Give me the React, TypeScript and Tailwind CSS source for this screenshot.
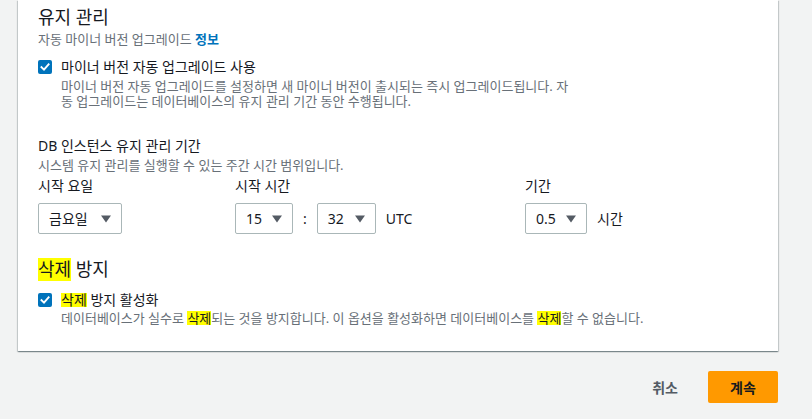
export default function App() {
  return (
    <div className="bg-[#f2f3f3] w-[812px] h-[419px] overflow-hidden font-['Noto_Sans','Noto_Sans_CJK_KR',sans-serif] text-[#16191f]">
      {/* 카드 */}
      <div className="bg-white ml-[18px] w-[760px] px-5 pt-[5px] pb-[25px] shadow-[0_1px_1px_0_rgba(0,28,36,0.3),1px_1px_1px_0_rgba(0,28,36,0.15),-1px_1px_1px_0_rgba(0,28,36,0.15)]">
        <h2 className="text-[18px] leading-6">유지 관리</h2>
        <div className="mt-[1px] text-[13px] text-[#687078] leading-[18px]">
          자동 마이너 버전 업그레이드 <span className="font-bold text-[#0073bb]">정보</span>
        </div>

        <div className="flex mt-[9px]">
          <Checkbox />
          <div className="ml-[9px]">
            <div className="text-[14px] leading-5">마이너 버전 자동 업그레이드 사용</div>
            <div className="mt-[2px] text-[13px] text-[#687078] leading-[15px]">
              <div>마이너 버전 자동 업그레이드를 설정하면 새 마이너 버전이 출시되는 즉시 업그레이드됩니다. 자</div>
              <div>동 업그레이드는 데이터베이스의 유지 관리 기간 동안 수행됩니다.</div>
            </div>
          </div>
        </div>

        <div className="mt-[27px] text-[14px] leading-5">DB 인스턴스 유지 관리 기간</div>
        <div className="mt-[1px] text-[13px] text-[#687078] leading-4">
          시스템 유지 관리를 실행할 수 있는 주간 시간 범위입니다.
        </div>

        <div className="flex mt-[3px]">
          <div className="w-[197px]">
            <div className="text-[14px] leading-5">시작 요일</div>
            <div className="mt-[7px]">
              <Select value="금요일" width="w-[84px]" />
            </div>
          </div>
          <div className="w-[290px]">
            <div className="text-[14px] leading-5">시작 시간</div>
            <div className="flex items-center gap-[10px] mt-[7px] text-[14px]">
              <Select value="15" width="w-[58px]" />
              <span>:</span>
              <Select value="32" width="w-[59px]" />
              <span>UTC</span>
            </div>
          </div>
          <div>
            <div className="text-[14px] leading-5">기간</div>
            <div className="flex items-center gap-[10px] mt-[7px] text-[14px]">
              <Select value="0.5" width="w-[62px]" />
              <span>시간</span>
            </div>
          </div>
        </div>

        <h2 className="mt-[24px] text-[18px] leading-[23px]">
          <span className="inline-block bg-[#ffff00] leading-[23px]">삭제</span> 방지
        </h2>

        <div className="flex mt-[9px]">
          <Checkbox />
          <div className="ml-[9px]">
            <div className="text-[14px] leading-5">
              <span className="inline-block bg-[#ffff00] leading-[14px]">삭제</span> 방지 활성화
            </div>
            <div className="mt-[1px] text-[13px] text-[#687078] leading-[15px]">
              데이터베이스가 실수로 <span className="inline-block bg-[#ffff00] text-[#16191f] leading-[14px]">삭제</span>되는 것을 방지합니다. 이 옵션을 활성화하면 데이터베이스를{" "}
              <span className="inline-block bg-[#ffff00] text-[#16191f] leading-[14px]">삭제</span>할 수 없습니다.
            </div>
          </div>
        </div>
      </div>

      {/* 버튼 */}
      <div className="flex justify-end items-center gap-[10px] mt-[20px] pr-[34px]">
        <button className="px-5 h-8 font-bold text-[#545b64] text-[14px]">취소</button>
        <button className="bg-[#ff9900] rounded-[2px] w-[70px] h-8 font-bold text-[#16191f] text-[14px]">계속</button>
      </div>
    </div>
  );
}

function Checkbox() {
  return (
    <div className="flex flex-shrink-0 justify-center items-center bg-[#0073bb] mt-[3px] rounded-[2px] w-[14px] h-[14px]">
      <svg width="10" height="10" viewBox="0 0 10 10" fill="none">
        <path d="M1.5 5.2 4 7.6 8.6 2.4" stroke="white" strokeWidth="1.9" strokeLinecap="square" />
      </svg>
    </div>
  );
}

function Select({ value, width }: { value: string; width: string }) {
  return (
    <div className={`flex justify-between items-center bg-white px-[10px] border border-[#aab7b8] rounded-[2px] h-[31px] text-[#16191f] text-[14px] ${width}`}>
      <span>{value}</span>
      <svg width="10" height="8" viewBox="0 0 10 8">
        <path d="M0 0.5h10L5 7.5z" fill="#545b64" />
      </svg>
    </div>
  );
}
